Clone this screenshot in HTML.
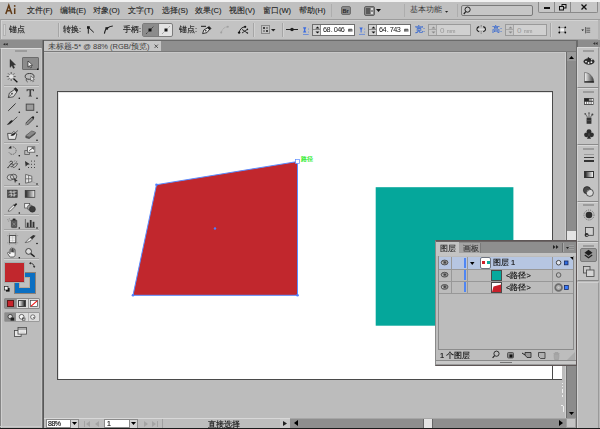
<!DOCTYPE html>
<html><head><meta charset="utf-8">
<style>
*{margin:0;padding:0;box-sizing:border-box}
html,body{width:600px;height:429px;overflow:hidden;background:#bdbdbd;font-family:"Liberation Sans",sans-serif;position:relative}
.a{position:absolute}
.t{position:absolute;white-space:nowrap;font-size:7.5px;line-height:9px;color:#2c2c2c}
.g{will-change:transform;-webkit-text-stroke-width:0.15px}
svg{position:absolute;overflow:visible}
</style></head><body>

<!-- ===== MENU BAR ===== -->
<div class="a" style="left:0;top:0;width:600px;height:2px;background:#f2f2f2"></div>
<div class="a" style="left:0;top:2px;width:600px;height:18px;background:#c0c0c0"></div>
<svg style="left:0;top:0" width="20" height="18"><path d="M5.8 14L8.8 5.4L11.8 14M7 10.8H10.6" stroke="#603a16" stroke-width="1.5" fill="none"/><path d="M14.7 8.2V14" stroke="#603a16" stroke-width="1.5"/><circle cx="14.7" cy="5.9" r="0.9" fill="#603a16"/></svg>
<div class="t" style="left:27px;top:6px;color:#202020;-webkit-text-stroke-width:0.1px">文件(F)</div>
<div class="t" style="left:60px;top:6px;color:#202020;-webkit-text-stroke-width:0.1px">编辑(E)</div>
<div class="t" style="left:93px;top:6px;color:#202020;-webkit-text-stroke-width:0.1px">对象(O)</div>
<div class="t" style="left:128px;top:6px;color:#202020;-webkit-text-stroke-width:0.1px">文字(T)</div>
<div class="t" style="left:162px;top:6px;color:#202020;-webkit-text-stroke-width:0.1px">选择(S)</div>
<div class="t" style="left:195px;top:6px;color:#202020;-webkit-text-stroke-width:0.1px">效果(C)</div>
<div class="t" style="left:229px;top:6px;color:#202020;-webkit-text-stroke-width:0.1px">视图(V)</div>
<div class="t" style="left:263px;top:6px;color:#202020;-webkit-text-stroke-width:0.1px">窗口(W)</div>
<div class="t" style="left:299px;top:6px;color:#202020;-webkit-text-stroke-width:0.1px">帮助(H)</div>
<div class="a" style="left:331px;top:4px;width:1px;height:13px;background:#adadad"></div>
<div class="a" style="left:341px;top:6px;width:10px;height:9px;background:#8a8a8a;border-radius:2px;border:1px solid #6e6e6e"></div>
<div class="t" style="left:342.6px;top:7.5px;font-size:5.5px;line-height:6px;color:#262626;font-weight:bold">Br</div>
<div class="a" style="left:364px;top:6px;width:11px;height:10px;background:#8a8a8a;border-radius:2px;border:1px solid #606060"></div>
<div class="a" style="left:366px;top:8px;width:4px;height:6px;background:#5a5a5a"></div>
<div class="a" style="left:371px;top:8px;width:2px;height:2px;background:#d8d8d8"></div>
<div class="a" style="left:371px;top:12px;width:2px;height:2px;background:#d8d8d8"></div>
<svg style="left:376px;top:9px" width="5" height="4"><path d="M0 0H5L2.5 3Z" fill="#111"/></svg>
<div class="a" style="left:404px;top:4px;width:1px;height:13px;background:#adadad"></div>
<div class="t" style="left:410px;top:5px;color:#3a3a3a">基本功能</div>
<svg style="left:445px;top:10.5px" width="4" height="2"><path d="M0 0H3.2L1.6 1.8Z" fill="#222"/></svg>
<div class="a" style="left:457px;top:4px;width:1px;height:13px;background:#adadad"></div>
<div class="a" style="left:461px;top:5px;width:72px;height:11px;border:1px solid #7a7a7a;border-radius:2px;background:#c6c6c6"></div>
<svg style="left:463px;top:6px" width="8" height="9"><circle cx="4.6" cy="3.6" r="2.6" fill="none" stroke="#222" stroke-width="1"/><path d="M2.8 5.6L0.8 8" stroke="#222" stroke-width="1.2"/></svg>
<!-- window buttons -->
<div class="a" style="left:538px;top:0;width:60px;height:13px;background:#c6c6c6;border:1px solid #8a8a8a;border-top:none;border-radius:0 0 2px 2px"></div>
<div class="a" style="left:554px;top:2px;width:1px;height:10px;background:#8a8a8a"></div>
<div class="a" style="left:570px;top:2px;width:1px;height:10px;background:#8a8a8a"></div>
<div class="a" style="left:0;top:0;width:600px;height:2px;background:#f2f2f2"></div>
<div class="a" style="left:544px;top:7px;width:6px;height:2px;background:#111"></div>
<svg style="left:559px;top:4px" width="8" height="7"><rect x="3" y="0.5" width="4" height="3.5" fill="none" stroke="#111" stroke-width="1"/><rect x="0.5" y="2.5" width="4" height="3.5" fill="#c6c6c6" stroke="#111" stroke-width="1"/></svg>
<svg style="left:581px;top:4px" width="6" height="6"><path d="M0.5 0.5L5.5 5.5M5.5 0.5L0.5 5.5" stroke="#111" stroke-width="1.3"/></svg>

<!-- ===== OPTIONS BAR ===== -->
<div class="a" style="left:0;top:19px;width:600px;height:21px;background:#c3c3c3;border-top:1px solid #9c9c9c;border-bottom:1px solid #a6a6a6;border-left:1px solid #a4a4a4;box-shadow:inset 1px 1px 0 #d2d2d2"></div>
<div class="a" style="left:3px;top:24px;width:3px;height:12px;background:#d2d2d2;border:1px solid #b2b2b2"></div>
<div class="t g" style="left:9px;top:25px;color:#1c1c1c">锚点</div>
<div class="a" style="left:58px;top:23px;width:2px;height:14px;background:#d0d0d0;border-left:1px solid #a6a6a6"></div>
<div class="t g" style="left:63px;top:25px;color:#1c1c1c">转换:</div>
<svg style="left:0;top:0" width="120" height="40"><rect x="87" y="26.2" width="2.8" height="2.6" fill="#1a1a1a"/><path d="M88.3 28.5V33.6M89.4 28.2L93.8 32.4" stroke="#1a1a1a" stroke-width="1" fill="none"/>
<rect x="105.4" y="27.2" width="2.6" height="2.4" fill="#1a1a1a"/><path d="M106 29C105 30.6 104.6 32 104.4 33.6M107.6 28C109 26.8 110.8 26.2 112.8 26" stroke="#1a1a1a" stroke-width="1.1" fill="none"/></svg>
<div class="t g" style="left:123px;top:25px;color:#1c1c1c">手柄:</div>
<div class="a" style="left:142px;top:23px;width:31px;height:14px;border:1px solid #7c7c7c;border-radius:2px;background:#e2e2e2"></div>
<div class="a" style="left:143px;top:24px;width:15px;height:12px;background:#8c8c8c"></div>
<div class="a" style="left:158px;top:24px;width:1px;height:12px;background:#7c7c7c"></div>
<svg style="left:145px;top:25px" width="10" height="10"><path d="M1 9L9 1" stroke="#222" stroke-width="0.8" stroke-dasharray="1.2 1"/><rect x="3.5" y="3.5" width="3" height="3" fill="#111"/></svg>
<svg style="left:161px;top:25px" width="10" height="10"><path d="M1 9L9 1" stroke="#555" stroke-width="0.6" stroke-dasharray="1 1"/><rect x="3.5" y="3.5" width="3" height="3" fill="#111"/></svg>
<div class="t g" style="left:179px;top:25px;color:#1c1c1c">锚点:</div>
<svg style="left:0;top:0" width="260" height="40">
<path d="M201 26.3H206" stroke="#1a1a1a" stroke-width="1"/>
<path d="M202.6 33.6L203.8 30L207.6 27.8L209.4 29.6L207 32.6Z" fill="#e6e6e6" stroke="#222" stroke-width="0.9"/>
<path d="M207.4 27.6L209.2 26.4L211 28.4L209.8 29.8Z" fill="#1a1a1a" stroke="#1a1a1a" stroke-width="0.6"/>
<circle cx="205.8" cy="30.8" r="0.8" fill="#222"/>
<path d="M221.4 32.4C222 29.2 224.4 27 227.6 26.8" stroke="#a2a2a2" stroke-width="0.9" fill="none" stroke-dasharray="1.2 0.6"/><circle cx="227.8" cy="26.8" r="1" fill="#a0a0a0"/><circle cx="221.2" cy="32.6" r="1" fill="#a0a0a0"/>
<path d="M239.2 32.6C239.6 29.4 242 27 245 26.8" stroke="#1e1e1e" stroke-width="1" fill="none"/><circle cx="239.1" cy="32.6" r="1.2" fill="#111"/><circle cx="245.2" cy="26.8" r="1.1" fill="#111"/><path d="M242 29.4L247.4 33M242 33L247.4 29.4" stroke="#222" stroke-width="0.9"/><circle cx="247.4" cy="29.4" r="0.8" fill="#222"/><circle cx="247.4" cy="33" r="0.8" fill="#222"/>
</svg>
<div class="a" style="left:253px;top:23px;width:2px;height:14px;background:#d0d0d0;border-left:1px solid #a6a6a6"></div>
<svg style="left:261px;top:25px" width="9" height="9"><rect x="0.5" y="0.5" width="8" height="8" fill="none" stroke="#333" stroke-width="0.8" stroke-dasharray="1 1"/><rect x="2" y="2" width="2" height="2" fill="#444"/><rect x="5" y="5" width="2" height="2" fill="#444"/><rect x="5" y="2" width="2" height="2" fill="#888"/><rect x="2" y="5" width="2" height="2" fill="#888"/></svg>
<svg style="left:271px;top:29px" width="5" height="3"><path d="M0 0H4.5L2.25 2.5Z" fill="#222"/></svg>
<div class="a" style="left:282px;top:23px;width:2px;height:14px;background:#d0d0d0;border-left:1px solid #a6a6a6"></div>
<svg style="left:286px;top:27px" width="12" height="5"><path d="M0 2.5H12" stroke="#222" stroke-width="1"/><circle cx="6" cy="2.5" r="1.8" fill="#222"/></svg>
<svg style="left:0;top:0" width="370" height="40"><path d="M303 27.3H306.3L305.1 29.9L306.3 32.5H303L304.2 29.9Z" fill="#3b6be0"/><path d="M303 34.5H308.7" stroke="#4a78e0" stroke-width="0.7"/><rect x="308.1" y="28.6" width="0.9" height="0.9" fill="#5a85e0"/><rect x="308.1" y="31.6" width="0.9" height="0.9" fill="#5a85e0"/>
<path d="M359.4 27.4H362.8L361.6 30V32.6H360.6V30Z" fill="#3b6be0"/><path d="M359 34.4H365" stroke="#4a78e0" stroke-width="0.7"/><rect x="364.2" y="28.6" width="0.9" height="0.9" fill="#5a85e0"/><rect x="364.2" y="31.6" width="0.9" height="0.9" fill="#5a85e0"/></svg>
<!-- X field -->
<div class="a" style="left:312px;top:24px;width:43px;height:12px;border:1px solid #6e6e6e;background:#fff"></div>
<div class="a" style="left:313px;top:25px;width:8px;height:10px;background:#d2d2d2;border-right:1px solid #8a8a8a"></div>
<div class="a" style="left:313px;top:29px;width:8px;height:1px;background:#8a8a8a"></div>
<svg style="left:315px;top:26px" width="5" height="8"><path d="M0.5 2.5H4.5L2.5 0.5Z" fill="#111"/><path d="M0.5 5.5H4.5L2.5 7.5Z" fill="#111"/></svg>
<div class="t" style="left:323.4px;top:24.6px;font-size:7.3px;line-height:9px;color:#151515;will-change:transform"><span style="display:inline-block;width:3.55px;text-align:center">6</span><span style="display:inline-block;width:3.55px;text-align:center">8</span><span style="display:inline-block;width:3.55px;text-align:center">.</span><span style="display:inline-block;width:3.55px;text-align:center">0</span><span style="display:inline-block;width:3.55px;text-align:center">4</span><span style="display:inline-block;width:3.55px;text-align:center">6</span></div>
<svg style="left:348px;top:28px" width="5" height="4"><path d="M0.5 3.6V1.2H2.2V3.6M2.2 1.2H4V3.6M1.4 1.2V3.6M3.1 1.2V3.6" stroke="#333" stroke-width="0.7" fill="none"/></svg>

<!-- Y field -->
<div class="a" style="left:368px;top:24px;width:43px;height:12px;border:1px solid #6e6e6e;background:#fff"></div>
<div class="a" style="left:369px;top:25px;width:8px;height:10px;background:#d2d2d2;border-right:1px solid #8a8a8a"></div>
<div class="a" style="left:369px;top:29px;width:8px;height:1px;background:#8a8a8a"></div>
<svg style="left:371px;top:26px" width="5" height="8"><path d="M0.5 2.5H4.5L2.5 0.5Z" fill="#111"/><path d="M0.5 5.5H4.5L2.5 7.5Z" fill="#111"/></svg>
<div class="t" style="left:379.4px;top:24.6px;font-size:7.3px;line-height:9px;color:#151515;will-change:transform"><span style="display:inline-block;width:3.55px;text-align:center">6</span><span style="display:inline-block;width:3.55px;text-align:center">4</span><span style="display:inline-block;width:3.55px;text-align:center">.</span><span style="display:inline-block;width:3.55px;text-align:center">7</span><span style="display:inline-block;width:3.55px;text-align:center">4</span><span style="display:inline-block;width:3.55px;text-align:center">3</span></div>
<svg style="left:404px;top:28px" width="5" height="4"><path d="M0.5 3.6V1.2H2.2V3.6M2.2 1.2H4V3.6M1.4 1.2V3.6M3.1 1.2V3.6" stroke="#333" stroke-width="0.7" fill="none"/></svg>
<div class="t g" style="left:415px;top:25px;color:#2a5fd0">宽:</div>
<!-- W field -->
<div class="a" style="left:428px;top:24px;width:43px;height:12px;border:1px solid #9a9a9a;background:#d0d0d0"></div>
<div class="a" style="left:429px;top:25px;width:8px;height:10px;background:#c8c8c8;border-right:1px solid #a6a6a6"></div>
<div class="a" style="left:429px;top:29px;width:8px;height:1px;background:#a6a6a6"></div>
<svg style="left:431px;top:26px" width="5" height="8"><path d="M0.5 2.5H4.5L2.5 0.5Z" fill="#8a8a8a"/><path d="M0.5 5.5H4.5L2.5 7.5Z" fill="#8a8a8a"/></svg>
<div class="t" style="left:440px;top:26px;font-size:8px;color:#9a9a9a">0</div>
<div class="t" style="left:447px;top:27px;font-size:5px;color:#8a8a8a">mm</div>
<svg style="left:0;top:0" width="600" height="40">
<path d="M479.2 26.6C477.6 27 476.9 28 476.9 29.2C476.9 30.4 477.6 31.4 479.2 31.8M483.2 26.6C484.8 27 485.5 28 485.5 29.2C485.5 30.4 484.8 31.4 483.2 31.8" stroke="#1a1a1a" stroke-width="1.1" fill="none"/>
<path d="M477.6 29.3H484.8" stroke="#e8e8e8" stroke-width="0.8"/>
<path d="M481.2 25V27.4M481.2 31.4V33.8" stroke="#444" stroke-width="0.7" stroke-dasharray="0.8 0.6"/>
</svg>
<div class="t g" style="left:492px;top:25px;color:#2a5fd0">高:</div>
<!-- H field -->
<div class="a" style="left:505px;top:24px;width:42px;height:12px;border:1px solid #9a9a9a;background:#d0d0d0"></div>
<div class="a" style="left:506px;top:25px;width:8px;height:10px;background:#c8c8c8;border-right:1px solid #a6a6a6"></div>
<div class="a" style="left:506px;top:29px;width:8px;height:1px;background:#a6a6a6"></div>
<svg style="left:508px;top:26px" width="5" height="8"><path d="M0.5 2.5H4.5L2.5 0.5Z" fill="#8a8a8a"/><path d="M0.5 5.5H4.5L2.5 7.5Z" fill="#8a8a8a"/></svg>
<div class="t" style="left:517px;top:26px;font-size:8px;color:#9a9a9a">0</div>
<div class="t" style="left:524px;top:27px;font-size:5px;color:#8a8a8a">mm</div>
<div class="a" style="left:550px;top:23px;width:2px;height:14px;background:#d0d0d0;border-left:1px solid #a6a6a6"></div>
<svg style="left:0;top:0" width="600" height="40">
<rect x="559.8" y="27.8" width="5" height="4.2" fill="#f6f6f6" stroke="#888" stroke-width="0.8"/>
<circle cx="559.3" cy="27.3" r="0.9" fill="#000"/><circle cx="565.3" cy="27.3" r="0.9" fill="#000"/><circle cx="559.3" cy="32.5" r="0.9" fill="#000"/><circle cx="565.3" cy="32.5" r="0.9" fill="#000"/>
<path d="M581.4 29.4H584L582.7 31Z" fill="#111"/>
<path d="M585.6 27V33.4" stroke="#333" stroke-width="0.7"/>
<path d="M586.4 28.2H590.2M586.4 30.2H590.2M586.4 32.2H590.2" stroke="#444" stroke-width="0.8"/>
</svg>
<div class="a" style="left:598px;top:20px;width:2px;height:20px;background:#b4b4b4"></div>

<!-- ===== LEFT TOOLS PANEL ===== -->
<div class="a" style="left:0;top:40px;width:42px;height:8px;background:#8d8d8d"></div>
<svg style="left:3px;top:42.5px" width="5" height="3"><path d="M2.3 0V2.6L0 1.3ZM4.7 0V2.6L2.4 1.3Z" fill="#2a2a2a"/></svg>
<div class="a" style="left:0;top:48px;width:42px;height:381px;background:#bcbcbc;border-top:1px solid #dcdcdc;border-left:1px solid #858585;box-shadow:inset 1px 0 0 #cfcfcf"></div>
<div class="a" style="left:0;top:426px;width:42px;height:1px;background:#cacaca"></div>
<div class="a" style="left:41px;top:48px;width:1px;height:380px;background:#c6c6c6"></div>
<div class="a" style="left:42px;top:40px;width:1px;height:389px;background:#747474"></div>
<div class="a" style="left:43px;top:40px;width:1px;height:389px;background:#585858"></div>
<div class="a" style="left:15px;top:50px;width:12px;height:2px;background:#9c9c9c"></div>
<!-- separators -->
<div class="a" style="left:4px;top:85px;width:35px;height:1px;background:#a4a4a4"></div><div class="a" style="left:4px;top:86px;width:35px;height:1px;background:#d2d2d2"></div>
<div class="a" style="left:4px;top:142px;width:35px;height:1px;background:#a4a4a4"></div><div class="a" style="left:4px;top:143px;width:35px;height:1px;background:#d2d2d2"></div>
<div class="a" style="left:4px;top:185px;width:35px;height:1px;background:#a4a4a4"></div><div class="a" style="left:4px;top:186px;width:35px;height:1px;background:#d2d2d2"></div>
<div class="a" style="left:4px;top:214px;width:35px;height:1px;background:#a4a4a4"></div><div class="a" style="left:4px;top:215px;width:35px;height:1px;background:#d2d2d2"></div>
<div class="a" style="left:4px;top:229px;width:35px;height:1px;background:#a4a4a4"></div><div class="a" style="left:4px;top:230px;width:35px;height:1px;background:#d2d2d2"></div>
<div class="a" style="left:4px;top:258px;width:35px;height:1px;background:#a4a4a4"></div><div class="a" style="left:4px;top:259px;width:35px;height:1px;background:#d2d2d2"></div>
<!-- direct selection pressed -->
<div class="a" style="left:22px;top:57px;width:17px;height:13px;background:#8c8c8c;border:1px solid #6c6c6c;border-radius:1px"></div>
<svg style="left:0;top:0" width="44" height="429">
<!-- tiny corner dots -->
<g fill="#111">
<path d="M37 68.5H38.5V70H37Z"/>
<circle cx="19.3" cy="98.3" r="0.8"/><circle cx="37" cy="98.3" r="0.8"/>
<circle cx="19.3" cy="112.3" r="0.8"/><circle cx="37" cy="112.3" r="0.8"/>
<circle cx="37" cy="126.3" r="0.8"/>
<circle cx="37" cy="140.3" r="0.8"/>
<circle cx="19.3" cy="155.7" r="0.8"/><circle cx="37" cy="155.7" r="0.8"/>
<circle cx="19.3" cy="169.3" r="0.8"/>
<circle cx="19.3" cy="184" r="0.8"/><circle cx="37" cy="184" r="0.8"/>
<circle cx="19.3" cy="213" r="0.8"/>
<circle cx="19.3" cy="228" r="0.8"/><circle cx="37" cy="228" r="0.8"/>
<circle cx="37" cy="243.5" r="0.8"/>
<circle cx="19.3" cy="257.7" r="0.8"/>
</g>
<!-- selection -->
<path d="M10 59.3V67.4L11.9 65.6L13.3 68.4L14.6 67.8L13.2 65L15.6 64.8Z" fill="#343434" stroke="#2a2a2a" stroke-width="0.4"/>
<!-- direct selection -->
<path d="M28 61V67.2L29.5 65.8L30.6 68L31.6 67.5L30.5 65.3L32.5 65.1Z" fill="#f6f6f6" stroke="#111" stroke-width="0.6"/>
<!-- magic wand -->
<path d="M11.2 72V74.2M11.2 78.8V81M6.7 76.5H8.9M13.5 76.5H15.7M8 73.3L9.5 74.8M12.9 78.2L14.4 79.7M14.4 73.3L12.9 74.8M9.5 78.2L8 79.7" stroke="#5e5e5e" stroke-width="1"/>
<circle cx="11.2" cy="76.5" r="2" fill="#e2e2e2"/>
<path d="M13.6 78.8L17.4 82.3" stroke="#161616" stroke-width="1.3"/>
<!-- lasso -->
<ellipse cx="29.6" cy="76.4" rx="4.4" ry="2.9" fill="none" stroke="#3a3a3a" stroke-width="1"/>
<path d="M26.4 78.8C26 80 26.4 81.4 27.6 82" stroke="#3a3a3a" stroke-width="0.8" fill="none"/>
<path d="M30.8 75.8V81.2L32 80L32.8 81.8L33.6 81.4L32.8 79.7L34.4 79.6Z" fill="#f4f4f4" stroke="#333" stroke-width="0.5"/>
<!-- pen -->
<path d="M8.3 97.6L9.4 93L14.4 89.6L16.8 92L13.4 96.8Z" fill="#dadada" stroke="#333" stroke-width="0.8"/>
<path d="M14.2 88.8L15.6 87.8L17.8 90L16.9 91.6Z" fill="#222" stroke="#222" stroke-width="0.8"/>
<circle cx="12" cy="93.6" r="0.9" fill="#444"/>
<path d="M8.3 97.6L11.5 94.3" stroke="#333" stroke-width="0.6"/>
<!-- T -->
<path d="M26.6 89.2H34V91.3H33.2L32.8 90.3H31.1V95.5L32 96.1V96.6H28.6V96.1L29.5 95.5V90.3H27.8L27.4 91.3H26.6Z" fill="#3e3e3e"/>
<!-- line -->
<path d="M8.2 110.9L15.6 103.5" stroke="#333" stroke-width="1"/>
<!-- rect -->
<rect x="26.2" y="104.1" width="7.6" height="6.2" fill="#9c9c9c" stroke="#444" stroke-width="0.9"/>
<!-- brush -->
<path d="M17.3 116.8L12.2 121.6" stroke="#444" stroke-width="0.8"/>
<path d="M12.6 120.8C11.5 122.8 10 124.3 7.4 124.5C9 123.2 9.6 121.6 11.3 120.6Z" fill="#222" stroke="#222" stroke-width="0.6"/>
<!-- pencil -->
<path d="M25.7 124.9L26.5 122.2L32.2 116.8L34 118.6L28.4 124.1Z" fill="#8a8a8a" stroke="#333" stroke-width="0.8"/>
<path d="M31.6 117.4L32.8 116.4C33.6 116 34.5 116.9 34.1 117.8L33.2 118.9Z" fill="#222"/>
<path d="M25.7 124.9L26.9 123.6" stroke="#eee" stroke-width="0.8"/>
<!-- blob brush -->
<path d="M7.6 133.4H11.8L13.8 131.6L16.8 134L15.4 139.4H8.4Z" fill="#e4e4e4" stroke="#333" stroke-width="0.8"/>
<path d="M10.5 135.6C11.8 133.4 14 132.6 15.5 133.2C15 135 12.8 136.4 10.5 135.6Z" fill="#222"/>
<path d="M14.8 133.4L17.8 130.6" stroke="#333" stroke-width="0.7"/>
<!-- eraser -->
<path d="M25.9 135.6L31.8 131L35.4 132.4L35 134L29.2 138.6L25.8 137.6Z" fill="#5a5a5a" stroke="#333" stroke-width="0.6"/>
<path d="M26 135.7L31.8 131.1L35.3 132.4L29.5 136.8Z" fill="#8a8a8a"/>
<!-- rotate -->
<path d="M10.6 147.2A3.8 3.8 0 1 1 9 152.4" fill="none" stroke="#6a6a6a" stroke-width="1" stroke-dasharray="1.6 0.7"/>
<path d="M8.4 148.6L10.6 146L11.6 148.6Z" fill="#222"/>
<!-- scale -->
<rect x="24.8" y="150.6" width="4.6" height="3.8" fill="none" stroke="#555" stroke-width="0.8"/>
<rect x="27.6" y="146.8" width="7.2" height="5.4" fill="#f2f2f2" stroke="#555" stroke-width="0.8"/>
<path d="M29.2 150.6L33.4 147.6M31.6 147.8H33.6V149.6" stroke="#333" stroke-width="0.8" fill="none"/>
<!-- warp -->
<path d="M8 167.6L11.4 163.2" stroke="#333" stroke-width="0.9"/>
<path d="M9.4 162.4C10.2 161 11.8 160.6 12.4 161.8C12.8 162.8 12 163.8 11.2 163.8C12.6 163.6 13.6 164.4 13.2 165.6C12.8 166.8 11.4 167 10.6 166.4" fill="none" stroke="#333" stroke-width="0.9"/>
<path d="M13.4 165.2C14.6 163.2 16 162.6 17.6 163.6C16.8 165.8 15 167.6 12.8 167.6" fill="none" stroke="#444" stroke-width="0.8"/>
<path d="M14.2 161.6L15 160.4M16 162L17.2 161.2" stroke="#555" stroke-width="0.6"/>
<circle cx="8" cy="167.6" r="0.7" fill="#333"/>
<!-- free transform -->
<path d="M25 161L30 164.2L27.6 164.8L25.6 166.4Z" fill="#333"/>
<g fill="#444"><rect x="31" y="160.6" width="1" height="1"/><rect x="34" y="160.6" width="1" height="1"/><rect x="31" y="163.8" width="1" height="1"/><rect x="34" y="163.8" width="1" height="1"/><rect x="28" y="167" width="1" height="1"/><rect x="31" y="167" width="1" height="1"/><rect x="34" y="167" width="1" height="1"/></g>
<!-- shape builder -->
<ellipse cx="10.4" cy="177.4" rx="3.2" ry="2.8" fill="#d0d0d0" stroke="#444" stroke-width="0.8"/>
<ellipse cx="13.6" cy="176.8" rx="3.2" ry="2.6" fill="none" stroke="#444" stroke-width="0.8"/>
<path d="M13.8 177.8L17.8 181L15.8 181.2L15 183.2Z" fill="#333"/>
<!-- perspective grid -->
<path d="M25.6 174.4L31.8 176.2V181.6L25.6 183.2Z" fill="#e6e6e6" stroke="#555" stroke-width="0.8"/>
<path d="M28.6 175.2V182.4M25.6 178.8H31.8" stroke="#555" stroke-width="0.7"/>
<path d="M31.8 181.6L35.4 183" stroke="#9a9a9a" stroke-width="0.6"/>
<!-- mesh -->
<rect x="7.6" y="190.1" width="9.6" height="7.2" fill="#4a4a4a" stroke="#333" stroke-width="0.6"/>
<path d="M8.6 192.2C10.6 191 12 193.2 16.4 191.6M8.6 195.2C10.6 193.6 12.4 196.4 16.4 194.6M11 190.6C10.4 192.6 12.2 194.4 11 196.8M14 190.6C13.6 193 14.8 194.6 14 196.8" fill="none" stroke="#eee" stroke-width="0.7"/>
<!-- gradient -->
<defs><linearGradient id="tg" x1="0" x2="1"><stop offset="0" stop-color="#222"/><stop offset="1" stop-color="#f2f2f2"/></linearGradient>
<linearGradient id="cg" x1="0" x2="1"><stop offset="0" stop-color="#f4f4f4"/><stop offset="1" stop-color="#1a1a1a"/></linearGradient></defs>
<rect x="25.2" y="190.5" width="9.6" height="6.8" fill="url(#tg)" stroke="#333" stroke-width="0.7"/>
<!-- eyedropper -->
<path d="M8.2 211.3L8.8 209.6L14 204.6L15.4 206L10.4 211Z" fill="#e8e8e8" stroke="#444" stroke-width="0.7"/>
<path d="M13.4 205.4L15.6 203.4C16.2 202.8 17.6 203.8 17 204.6L14.8 206.6Z" fill="#222"/>
<!-- blend -->
<rect x="24.7" y="203.4" width="5" height="4.6" fill="#f0f0f0" stroke="#444" stroke-width="0.7"/>
<circle cx="30" cy="207.6" r="2.7" fill="#9a9a9a" stroke="#444" stroke-width="0.6"/>
<circle cx="32.4" cy="209.2" r="3" fill="#3c3c3c" stroke="#222" stroke-width="0.5"/>
<!-- symbol sprayer -->
<rect x="11.4" y="220" width="5.4" height="7.6" rx="0.8" fill="#5a5a5a" stroke="#333" stroke-width="0.6"/>
<rect x="12.8" y="218.6" width="2.6" height="1.6" fill="#222"/>
<path d="M12.6 222.6L15.6 225.6M15.6 222.6L12.6 225.6" stroke="#999" stroke-width="0.6"/>
<g fill="#8a8a8a"><circle cx="7.8" cy="219.6" r="0.6"/><circle cx="9.4" cy="218.8" r="0.6"/><circle cx="8.6" cy="221" r="0.6"/><circle cx="10.4" cy="220.4" r="0.6"/></g>
<!-- column graph -->
<path d="M25.4 219V227.4H35" fill="none" stroke="#555" stroke-width="0.8"/>
<rect x="26.8" y="222.6" width="1.8" height="4.6" fill="#333"/><rect x="29.8" y="220" width="1.8" height="7.2" fill="#333"/><rect x="32.6" y="221.8" width="1.8" height="5.4" fill="#333"/>
<!-- artboard -->
<rect x="9.4" y="235.6" width="6.4" height="7.2" fill="#f0f0f0" stroke="#3a3a3a" stroke-width="0.9"/>
<path d="M10 237.9H15.2M10 240.4H15.2M12.6 236V242.4" stroke="#b8b8b8" stroke-width="0.5"/>
<path d="M9.4 233.2V234.8M15.8 233.2V234.8M9.4 243.6V245M15.8 243.6V245M7 235.6H8.6M16.6 235.6H18.2M7 242.8H8.6M16.6 242.8H18.2" stroke="#8a8a8a" stroke-width="0.6"/>
<!-- slice -->
<path d="M25.2 242.6L30 237.6L32.4 239C31 241.2 28.4 242.2 25.2 242.6Z" fill="#e8e8e8" stroke="#444" stroke-width="0.7"/>
<path d="M30 237.4L33.2 235L35.6 235.8L32.6 239Z" fill="#333"/>
<!-- hand -->
<path d="M9.6 256.6L7.6 253.4C7.2 252.6 8.2 251.8 8.9 252.5L10 253.8V249.6C10 248.8 11.2 248.8 11.2 249.6V252.2V248.4C11.2 247.6 12.5 247.6 12.5 248.4V252.2V248.8C12.5 248 13.8 248 13.8 248.8V252.4V249.8C13.8 249 15.1 249 15.1 249.8V254.6C15.1 256 14.4 257 13 257H10.6Z" fill="#f6f6f6" stroke="#3a3a3a" stroke-width="0.75" stroke-linejoin="round"/>
<!-- zoom -->
<circle cx="28.6" cy="251.4" r="2.9" fill="#dcdcdc" stroke="#333" stroke-width="0.9"/>
<path d="M30.8 253.6L34.6 256.8" stroke="#222" stroke-width="1.5"/>
</svg>

<!-- fill/stroke -->
<div class="a" style="left:14px;top:272px;width:22px;height:22px;background:#0b6fc2;border:1px solid #8a8078"></div>
<div class="a" style="left:19px;top:277px;width:11px;height:11px;background:#c0c0c0;border:1px solid #b8a898"></div>
<div class="a" style="left:4px;top:262px;width:21px;height:21px;background:#c1272d;border:1px solid #a6aeae;box-shadow:inset 0 -1px 0 #a82024"></div>
<svg style="left:29px;top:262px" width="7" height="6"><path d="M1 1.2C3.5 1 5 2.5 5.2 5" fill="none" stroke="#222" stroke-width="0.8"/><path d="M0 1.2L1.8 0V2.4Z" fill="#222"/><path d="M4 4.2H6.4L5.2 6Z" fill="#222"/></svg>
<svg style="left:4px;top:286px" width="6" height="6"><rect x="2" y="2" width="3.6" height="3.6" fill="#111"/><rect x="0.4" y="0.4" width="3.6" height="3.6" fill="#f4f4f4" stroke="#222" stroke-width="0.7"/></svg>
<!-- color mode buttons -->
<div class="a" style="left:4px;top:298px;width:36px;height:11px;background:#dadada;border:1px solid #8a8a8a;border-radius:1px"></div>
<div class="a" style="left:5px;top:299px;width:11px;height:9px;background:#8c8c8c"></div>
<div class="a" style="left:16px;top:299px;width:1px;height:9px;background:#9a9a9a"></div>
<div class="a" style="left:28px;top:299px;width:1px;height:9px;background:#9a9a9a"></div>
<div class="a" style="left:7px;top:300px;width:7px;height:7px;background:#c8242c;border:1px solid #5a1a1a"></div>
<div class="a" style="left:18px;top:300px;width:8px;height:7px;background:linear-gradient(90deg,#f6f6f6,#1c1c1c);border:1px solid #444"></div>
<svg style="left:30px;top:300px" width="8" height="7"><rect x="0.4" y="0.4" width="7.2" height="6.2" fill="#fff" stroke="#444" stroke-width="0.7"/><path d="M0.8 6.4L7.4 0.6" stroke="#ee1111" stroke-width="1.1"/></svg>
<!-- drawing modes -->
<div class="a" style="left:4px;top:312px;width:36px;height:10px;background:#dcdcdc;border:1px solid #9a9a9a;border-radius:1px"></div>
<div class="a" style="left:5px;top:313px;width:11px;height:8px;background:#8c8c8c"></div>
<div class="a" style="left:28px;top:313px;width:1px;height:8px;background:#b4b4b4"></div>
<svg style="left:7px;top:313px" width="30" height="9">
<circle cx="3.2" cy="3.6" r="2.2" fill="#d8d8d8" stroke="#222" stroke-width="0.7"/><rect x="3.6" y="4.6" width="3.6" height="3" fill="#222"/>
<circle cx="14.6" cy="3.8" r="2.4" fill="#f4f4f4" stroke="#333" stroke-width="0.7"/><rect x="15.6" y="5" width="2.4" height="2.2" fill="none" stroke="#333" stroke-width="0.6"/>
<circle cx="25.8" cy="4" r="2.2" fill="#f4f4f4" stroke="#444" stroke-width="0.7"/><path d="M25.6 4.2H27.4V5.6Z" fill="#333"/>
</svg>
<!-- screen mode -->
<svg style="left:14px;top:327px" width="13" height="10"><rect x="0.5" y="3.5" width="6.6" height="6" fill="#e6e6e6" stroke="#444" stroke-width="0.8"/><rect x="4" y="0.5" width="8.4" height="6.6" fill="#eee" stroke="#444" stroke-width="0.8"/><path d="M4 2H12.4" stroke="#444" stroke-width="0.8"/><path d="M6 4H11M6 5.4H11" stroke="#bbb" stroke-width="0.4"/></svg>

<!-- ===== DOCUMENT AREA ===== -->
<div class="a" style="left:44px;top:40px;width:533px;height:12px;background:#8f8f8f"></div>
<div class="a" style="left:44px;top:40px;width:533px;height:1px;background:#6a6a6a"></div>
<div class="a" style="left:44px;top:41px;width:117px;height:11px;background:#c6c6c6"></div>
<div class="t" style="left:47.6px;top:42px;font-size:7.5px;color:#3a3a3a">未标题-5* @ 88% (RGB/预览)</div>
<svg style="left:154px;top:44px" width="5" height="5"><path d="M0.6 0.6L3.9 3.9M3.9 0.6L0.6 3.9" stroke="#444" stroke-width="0.9"/></svg>
<div class="a" style="left:44px;top:51px;width:533px;height:1px;background:#7a7a7a"></div>
<div class="a" style="left:44px;top:52px;width:522px;height:366px;background:#bcbcbc;border-top:1px solid #c8c8c8"></div>
<!-- artboard -->
<div class="a" style="left:57px;top:91px;width:496px;height:289px;background:#fff;border:1px solid #4a4a4a;box-shadow:inset 1px 1px 0 #e4e4e4"></div>

<div class="a" style="left:553px;top:366px;width:9px;height:13px;background:#fff"></div>
<div class="a" style="left:553px;top:379px;width:9px;height:1px;background:#4a4a4a"></div>
<div class="a" style="left:565px;top:52px;width:1px;height:366px;background:#cdcdcd"></div>
<div class="a" style="left:562px;top:383px;width:1px;height:1px;background:#f0f0f0"></div>
<div class="a" style="left:562px;top:386px;width:1px;height:1px;background:#f0f0f0"></div>
<div class="a" style="left:562px;top:389px;width:1px;height:4px;background:#f0f0f0"></div>
<div class="a" style="left:562px;top:395px;width:1px;height:2px;background:#f0f0f0"></div>
<div class="a" style="left:561px;top:405px;width:2px;height:1px;background:#f0f0f0"></div>
<div class="a" style="left:563px;top:406px;width:1px;height:6px;background:#f0f0f0"></div>
<!-- shapes -->
<svg style="left:0;top:0" width="600" height="429">
<polygon points="156.5,184.7 297.5,161.5 297.5,295.3 133,295.3" fill="#c1272d" stroke="#5a8cff" stroke-width="1"/>
<rect x="375.7" y="187.2" width="137.7" height="138.5" fill="#05a79b"/>
<circle cx="215" cy="228.5" r="1.2" fill="#4f7fff"/>
<circle cx="156.5" cy="184.7" r="1.3" fill="#4f7fff"/>
<circle cx="133" cy="295.3" r="1.3" fill="#4f7fff"/>
<circle cx="297.5" cy="295.3" r="1.3" fill="#4f7fff"/>
<rect x="295.6" y="159.6" width="4" height="4" fill="#fff" stroke="#5b8cff" stroke-width="0.7"/>
</svg>
<div class="t" style="left:301px;top:155.5px;font-size:5.8px;line-height:7px;color:#30ee30;-webkit-text-stroke:0.25px #30ee30">路径</div>

<!-- v scrollbar -->
<div class="a" style="left:566px;top:52px;width:10px;height:366px;background:#8c8c8c;border-left:1px solid #6e6e6e"></div>
<div class="a" style="left:567px;top:52px;width:9px;height:9px;background:#9a9a9a"></div>
<svg style="left:569px;top:56px" width="5" height="3"><path d="M0 3H5L2.5 0Z" fill="#000"/></svg>
<div class="a" style="left:567px;top:231px;width:9px;height:9px;background:#e4e4e4"></div>
<svg style="left:569px;top:412px" width="5" height="3"><path d="M0 0H5L2.5 3Z" fill="#000"/></svg>
<div class="a" style="left:576px;top:40px;width:2px;height:389px;background:#6a6a6a"></div>

<!-- ===== STATUS BAR ===== -->
<div class="a" style="left:44px;top:418px;width:246px;height:10px;background:#bdbdbd;border-top:1px solid #d8d8d8"></div>
<div class="a" style="left:46px;top:419px;width:33px;height:9px;background:#fff;border:1px solid #8a8a8a"></div>
<div class="a" style="left:70px;top:420px;width:8px;height:8px;background:#d4d4d4;border-left:1px solid #8a8a8a"></div>
<svg style="left:72px;top:422px" width="5" height="3"><path d="M0 0H5L2.5 3Z" fill="#000"/></svg>
<div class="t g" style="left:48px;top:420px;font-size:7px;line-height:8px;color:#111;letter-spacing:-0.5px">88%</div>
<svg style="left:84px;top:421px" width="6" height="6"><path d="M0.5 0V6" stroke="#a4a4a4"/><path d="M6 0V6L2 3Z" fill="#a4a4a4"/></svg>
<svg style="left:95px;top:421px" width="5" height="6"><path d="M4 0V6L0 3Z" fill="#a4a4a4"/></svg>
<div class="a" style="left:104px;top:419px;width:34px;height:9px;background:#fff;border:1px solid #8a8a8a"></div>
<div class="a" style="left:129px;top:420px;width:8px;height:8px;background:#d4d4d4;border-left:1px solid #8a8a8a"></div>
<svg style="left:131px;top:422px" width="5" height="3"><path d="M0 0H5L2.5 3Z" fill="#000"/></svg>
<div class="t g" style="left:107px;top:420px;font-size:7px;line-height:8px;color:#111">1</div>
<svg style="left:144px;top:421px" width="5" height="6"><path d="M0 0V6L4 3Z" fill="#a4a4a4"/></svg>
<svg style="left:152px;top:421px" width="6" height="6"><path d="M5.5 0V6" stroke="#a4a4a4"/><path d="M0 0V6L4 3Z" fill="#a4a4a4"/></svg>
<div class="a" style="left:162px;top:419px;width:1px;height:9px;background:#a0a0a0"></div>
<div class="t g" style="left:208px;top:420px;color:#111">直接选择</div>
<div class="a" style="left:280px;top:419px;width:10px;height:9px;background:#c8c8c8"></div>
<svg style="left:283px;top:421px" width="4" height="5"><path d="M0 0V5L4 2.5Z" fill="#222"/></svg>
<div class="a" style="left:290px;top:418px;width:276px;height:10px;background:#8e8e8e;border-top:1px solid #a6a6a6"></div>
<svg style="left:294px;top:420px" width="4" height="6"><path d="M4 0V6L0 3Z" fill="#000"/></svg>
<div class="a" style="left:423px;top:419px;width:10px;height:9px;background:#e4e4e4;border-left:1px solid #666;border-right:1px solid #666"></div>
<svg style="left:559px;top:420px" width="4" height="6"><path d="M0 0V6L4 3Z" fill="#000"/></svg>
<div class="a" style="left:566px;top:418px;width:10px;height:10px;background:#c4c4c4;border:1px solid #a0a0a0"></div>
<div class="a" style="left:0;top:428px;width:600px;height:1px;background:#1a1a1a"></div>

<!-- ===== RIGHT DOCK ===== -->
<div class="a" style="left:578px;top:40px;width:22px;height:8px;background:#8d8d8d"></div>
<svg style="left:593px;top:42px" width="5" height="3"><path d="M2.2 0V3L0 1.5ZM4.6 0V3L2.4 1.5Z" fill="#333"/></svg>
<div class="a" style="left:577px;top:47px;width:23px;height:381px;background:#b8b8b8"></div>
<div class="a" style="left:577px;top:47px;width:22px;height:40px;background:#c3c3c3;border-top:1px solid #d8d8d8;border-left:1px solid #d4d4d4;border-right:1px solid #9a9a9a"></div>
<div class="a" style="left:577px;top:87px;width:22px;height:57px;background:#c3c3c3;border-top:1px solid #8a8a8a;border-left:1px solid #d4d4d4;border-right:1px solid #9a9a9a;box-shadow:inset 0 1px 0 #d8d8d8"></div>
<div class="a" style="left:577px;top:144px;width:22px;height:57px;background:#c3c3c3;border-top:1px solid #8a8a8a;border-left:1px solid #d4d4d4;border-right:1px solid #9a9a9a;box-shadow:inset 0 1px 0 #d8d8d8"></div>
<div class="a" style="left:577px;top:201px;width:22px;height:40px;background:#c3c3c3;border-top:1px solid #8a8a8a;border-left:1px solid #d4d4d4;border-right:1px solid #9a9a9a;box-shadow:inset 0 1px 0 #d8d8d8"></div>
<div class="a" style="left:577px;top:241px;width:22px;height:40px;background:#c3c3c3;border-top:1px solid #8a8a8a;border-left:1px solid #d4d4d4;border-right:1px solid #9a9a9a;border-bottom:1px solid #8a8a8a;box-shadow:inset 0 1px 0 #d8d8d8"></div>
<div class="a" style="left:577px;top:282px;width:22px;height:146px;background:#bdbdbd;border-top:1px solid #d0d0d0;border-left:1px solid #d4d4d4;border-right:1px solid #9a9a9a"></div>
<div class="a" style="left:583px;top:50px;width:11px;height:2px;background:#9c9c9c"></div>
<div class="a" style="left:583px;top:91px;width:11px;height:2px;background:#9c9c9c"></div>
<div class="a" style="left:583px;top:148px;width:11px;height:2px;background:#9c9c9c"></div>
<div class="a" style="left:583px;top:204px;width:11px;height:2px;background:#9c9c9c"></div>
<div class="a" style="left:583px;top:245px;width:11px;height:2px;background:#9c9c9c"></div>
<!-- palette -->
<svg style="left:583px;top:57px" width="12" height="8"><ellipse cx="6" cy="4.5" rx="5.5" ry="3.3" fill="#2e2e2e"/><circle cx="3" cy="4.6" r="0.9" fill="#eee"/><circle cx="5.6" cy="6" r="0.9" fill="#eee"/><circle cx="8.4" cy="5.2" r="0.9" fill="#eee"/><circle cx="8.8" cy="2.6" r="0.8" fill="#ddd"/><path d="M5 0.5L7 3" stroke="#222" stroke-width="1.4"/></svg>
<!-- gradient wedge -->
<svg style="left:584px;top:72px" width="10" height="11"><defs><linearGradient id="gw" x1="0" x2="1"><stop offset="0" stop-color="#f6f6f6"/><stop offset="1" stop-color="#3a3a3a"/></linearGradient></defs><path d="M0.5 0.5V10.5H9.8C9.8 5 5.5 0.5 0.5 0.5Z" fill="url(#gw)" stroke="#555" stroke-width="0.6"/><path d="M0.5 9.8H9.8" stroke="#222" stroke-width="1.2"/></svg>
<!-- swatches -->
<svg style="left:584px;top:98px" width="10" height="7"><rect x="0" y="0" width="9.5" height="6.8" fill="#3a3a3a"/><rect x="0.8" y="0.8" width="3.6" height="2" fill="#222"/><rect x="5.2" y="0.8" width="1.6" height="2" fill="#bbb"/><rect x="7.4" y="0.8" width="1.6" height="2" fill="#e8e8e8"/><rect x="0.8" y="3.8" width="1.6" height="2.2" fill="#f2f2f2"/><rect x="3" y="3.8" width="1.6" height="2.2" fill="#f2f2f2"/><rect x="5.2" y="3.8" width="1.6" height="2.2" fill="#f2f2f2"/><rect x="7.4" y="3.8" width="1.6" height="2.2" fill="#f2f2f2"/></svg>
<!-- brushes -->
<svg style="left:584px;top:112px" width="10" height="12"><rect x="2.6" y="5.6" width="4.8" height="6.2" fill="#333"/><path d="M3.6 5.4L1.4 2M5 5.4V1M6.4 5.4L8.2 2.6" stroke="#444" stroke-width="0.7"/><circle cx="1.2" cy="1.8" r="0.9" fill="#555"/><circle cx="8.4" cy="2.4" r="1" fill="#444"/><rect x="4.5" y="0.2" width="1" height="1.4" fill="#444"/><path d="M2.6 8.6H7.4" stroke="#666" stroke-width="0.5"/></svg>
<!-- club -->
<svg style="left:584px;top:129px" width="10" height="10"><circle cx="5" cy="2.6" r="2.4" fill="#2c2c2c"/><circle cx="2.5" cy="5.8" r="2.4" fill="#2c2c2c"/><circle cx="7.5" cy="5.8" r="2.4" fill="#2c2c2c"/><path d="M5 5L3 9.8H7Z" fill="#2c2c2c"/></svg>
<!-- stroke -->
<div class="a" style="left:584px;top:154px;width:10px;height:1px;background:#9a9a9a"></div>
<div class="a" style="left:584px;top:157px;width:10px;height:1px;background:#3a3a3a"></div>
<div class="a" style="left:584px;top:160px;width:10px;height:2px;background:#333"></div>
<!-- gradient -->
<div class="a" style="left:584px;top:171px;width:10px;height:7px;background:linear-gradient(90deg,#222,#f4f4f4);border:1px solid #333"></div>
<!-- transparency -->
<svg style="left:583px;top:186px" width="11" height="11"><circle cx="4" cy="4.2" r="3.6" fill="#4a4a4a" stroke="#222" stroke-width="0.7"/><circle cx="6.8" cy="6.8" r="3.6" fill="#d8d8d8" stroke="#333" stroke-width="0.8"/><path d="M4.3 6.2A2.6 2.6 0 0 1 6.6 4" stroke="#555" stroke-width="0.6" fill="none"/></svg>
<!-- appearance -->
<svg style="left:583px;top:209px" width="12" height="12"><circle cx="6" cy="6" r="5" fill="none" stroke="#555" stroke-width="0.8" stroke-dasharray="1 1"/><circle cx="6" cy="6" r="3.3" fill="#2e2e2e"/></svg>
<!-- graphic styles -->
<svg style="left:584px;top:227px" width="10" height="11"><rect x="1.5" y="0.5" width="7.8" height="7.8" fill="#cfcfcf" stroke="#3a3a3a" stroke-width="0.8"/><circle cx="2.6" cy="8" r="2" fill="#2a2a2a"/><circle cx="3" cy="8.5" r="0.7" fill="#ddd"/></svg>
<!-- layers btn -->
<div class="a" style="left:580px;top:248px;width:17px;height:14px;background:#9a9a9a;border:1px solid #7c7c7c;border-radius:2px"></div>
<svg style="left:584px;top:249px" width="9" height="11"><path d="M4.5 0.8L8.5 3.8L4.5 6.8L0.5 3.8Z" fill="#1e1e1e"/><path d="M0.8 6L4.5 8.8L8.2 6" fill="none" stroke="#1e1e1e" stroke-width="1.3"/></svg>
<!-- artboards -->
<svg style="left:583px;top:266px" width="12" height="11"><rect x="0.5" y="0.5" width="6.5" height="6.5" fill="#c8c8c8" stroke="#444" stroke-width="0.8"/><rect x="3.5" y="4" width="7.5" height="6.5" fill="#d4d4d4" stroke="#444" stroke-width="0.8"/></svg>

<!-- ===== LAYERS PANEL ===== -->
<div class="a" style="left:435px;top:240px;width:142px;height:126px;background:#bdbdbd;border:1px solid #5e5656;border-left-color:#8a8a8a"></div>
<div class="a" style="left:436px;top:241px;width:140px;height:12px;background:#8e8e8e;border-top:1px solid #6a6464"></div>
<div class="a" style="left:436px;top:242px;width:23px;height:11px;background:#c4c4c4"></div>
<div class="t g" style="left:440px;top:244px;color:#2a2a2a">图层</div>
<div class="a" style="left:459px;top:243px;width:22px;height:10px;background:#a4a4a4;border-right:1px solid #7a7a7a"></div>
<div class="t g" style="left:463px;top:244px;color:#3a3a3a">画板</div>
<svg style="left:553px;top:245px" width="6" height="4"><path d="M0 0V4L2.5 2ZM3 0V4L5.5 2Z" fill="#222"/></svg>
<div class="a" style="left:562px;top:243px;width:1px;height:9px;background:#6e6e6e"></div>
<div class="a" style="left:563px;top:243px;width:1px;height:9px;background:#a8a8a8"></div>
<svg style="left:566px;top:247px" width="3" height="2"><path d="M0 0H3L1.5 2Z" fill="#222"/></svg>
<div class="a" style="left:569px;top:245px;width:5px;height:5px;background:repeating-linear-gradient(#9e9e9e 0 1px,#868686 1px 2px)"></div>
<div class="a" style="left:436px;top:253px;width:140px;height:3px;background:#c4c4c4"></div>
<!-- list -->
<div class="a" style="left:438px;top:256px;width:136px;height:94px;background:#bcbcbc;border:1px solid #8c8c8c;border-top:none"></div>
<div class="a" style="left:439px;top:257px;width:134px;height:12px;background:#b6c6e2"></div>
<div class="a" style="left:439px;top:269px;width:134px;height:1px;background:#989898"></div>
<div class="a" style="left:439px;top:281px;width:134px;height:1px;background:#989898"></div>
<div class="a" style="left:439px;top:293px;width:134px;height:1px;background:#989898"></div>
<div class="a" style="left:451px;top:257px;width:1px;height:36px;background:#989898"></div>
<div class="a" style="left:464px;top:258px;width:1.6px;height:10px;background:#4f86f4"></div>
<div class="a" style="left:464px;top:270px;width:1.6px;height:10px;background:#4f86f4"></div>
<div class="a" style="left:464px;top:282px;width:1.6px;height:10px;background:#4f86f4"></div>
<div class="a" style="left:467px;top:257px;width:1px;height:36px;background:#989898"></div>
<div class="a" style="left:552px;top:257px;width:1px;height:36px;background:#989898"></div>
<svg style="left:440px;top:260px" width="9" height="31">
<g fill="#8e8e8e" stroke="#4e4e4e" stroke-width="0.9"><ellipse cx="4.6" cy="2.5" rx="3.4" ry="2.4"/><ellipse cx="4.6" cy="14.7" rx="3.4" ry="2.4"/><ellipse cx="4.6" cy="26.9" rx="3.4" ry="2.4"/></g>
<g fill="#444"><circle cx="4.8" cy="2.4" r="1.2"/><circle cx="4.8" cy="14.6" r="1.2"/><circle cx="4.8" cy="26.8" r="1.2"/></g>
<g fill="#dedede"><circle cx="2.6" cy="2.8" r="0.6"/><circle cx="2.6" cy="15" r="0.6"/><circle cx="2.6" cy="27.2" r="0.6"/></g>
</svg>
<svg style="left:470px;top:262px" width="5" height="3"><path d="M0 0H4.5L2.25 3Z" fill="#000"/></svg>
<div class="a" style="left:480px;top:257px;width:11px;height:12px;background:#fff;border:1px solid #6e7480;border-radius:2px"></div>
<div class="a" style="left:482px;top:261px;width:3px;height:3px;background:#d0202a"></div>
<div class="a" style="left:487px;top:261px;width:3px;height:3px;background:#0ba89c"></div>
<div class="t g" style="left:493px;top:258px;color:#111">图层</div>
<div class="t g" style="left:511px;top:258px;color:#111">1</div>
<div class="a" style="left:491px;top:270px;width:11px;height:11px;background:#06a99d;border:1px solid #4a4a4a"></div>
<div class="a" style="left:491px;top:282px;width:11px;height:11px;background:#fff;border:1px solid #4a4a4a"></div>
<svg style="left:492px;top:283px" width="9" height="9"><path d="M1.5 3.5L9 1.5V9H0Z" fill="#c8202a"/></svg>
<div class="t g" style="left:506px;top:271px;color:#111">&lt;路径&gt;</div>
<div class="t g" style="left:506px;top:283px;color:#111">&lt;路径&gt;</div>
<svg style="left:570px;top:257px" width="3" height="3"><path d="M0 0H3V3Z" fill="#000"/></svg>
<svg style="left:553px;top:257px" width="18" height="36">
<circle cx="5.6" cy="5.7" r="2.3" fill="#e4e8f0" stroke="#3a3a3a" stroke-width="0.9"/>
<circle cx="5.6" cy="18" r="2.3" fill="none" stroke="#555" stroke-width="0.9"/>
<circle cx="5.6" cy="30.5" r="3.3" fill="#cfcfcf" stroke="#6e6e6e" stroke-width="1.9"/><circle cx="5.6" cy="30.5" r="1.3" fill="none" stroke="#8a8a8a" stroke-width="0.5"/>
<rect x="11.5" y="4" width="3.5" height="3.8" fill="#2e6be0" stroke="#1a2a60" stroke-width="0.8"/>
<rect x="11.5" y="28.5" width="3.8" height="4" fill="#3a7cff" stroke="#1a2a60" stroke-width="0.8"/>
</svg>
<!-- footer -->
<div class="t g" style="left:439.5px;top:351px;color:#111">1</div>
<div class="t g" style="left:446px;top:351px;color:#111">个图层</div>
<svg style="left:492px;top:350px" width="8" height="9"><circle cx="4.5" cy="3.7" r="2.6" fill="none" stroke="#222" stroke-width="0.9"/><path d="M2.6 5.6L0.6 7.9" stroke="#222" stroke-width="1.1"/></svg>
<svg style="left:507px;top:352px" width="8" height="7"><rect x="0.5" y="0.5" width="6" height="5.5" rx="1" fill="#8a8a8a" stroke="#444" stroke-width="0.8"/><rect x="2.5" y="2.5" width="3" height="3" fill="#111"/></svg>
<svg style="left:522px;top:352px" width="10" height="6"><path d="M0 1L3 3" stroke="#222" stroke-width="1"/><path d="M3 0.5H9V5.5H5L3 3Z" fill="#9a9a9a" stroke="#222" stroke-width="0.8"/></svg>
<svg style="left:538px;top:352px" width="8" height="7"><path d="M0.5 0.5H7V6.5H2.5L0.5 4.5Z" fill="#b0b0b0" stroke="#333" stroke-width="0.8"/></svg>
<svg style="left:553px;top:352px" width="7" height="8"><path d="M0.5 1.5H6.5M2 1.5V0.5H5V1.5M1 2.5H6L5.5 7.5H1.5Z" fill="#a8a8a8" stroke="#a0a0a0" stroke-width="0.8"/></svg>
<svg style="left:567px;top:352px" width="8" height="8"><path d="M8 0V8H0Z" fill="#aaaaaa"/></svg>
<div class="a" style="left:436px;top:360px;width:140px;height:1px;background:#8a8a8a"></div>
<div class="a" style="left:436px;top:361px;width:140px;height:3px;background:#c8c8c8"></div>
<div class="a" style="left:500px;top:362px;width:12px;height:1px;background:#777"></div>
<div class="a" style="left:436px;top:364px;width:140px;height:1px;background:#9a9a9a"></div>

</body></html>
